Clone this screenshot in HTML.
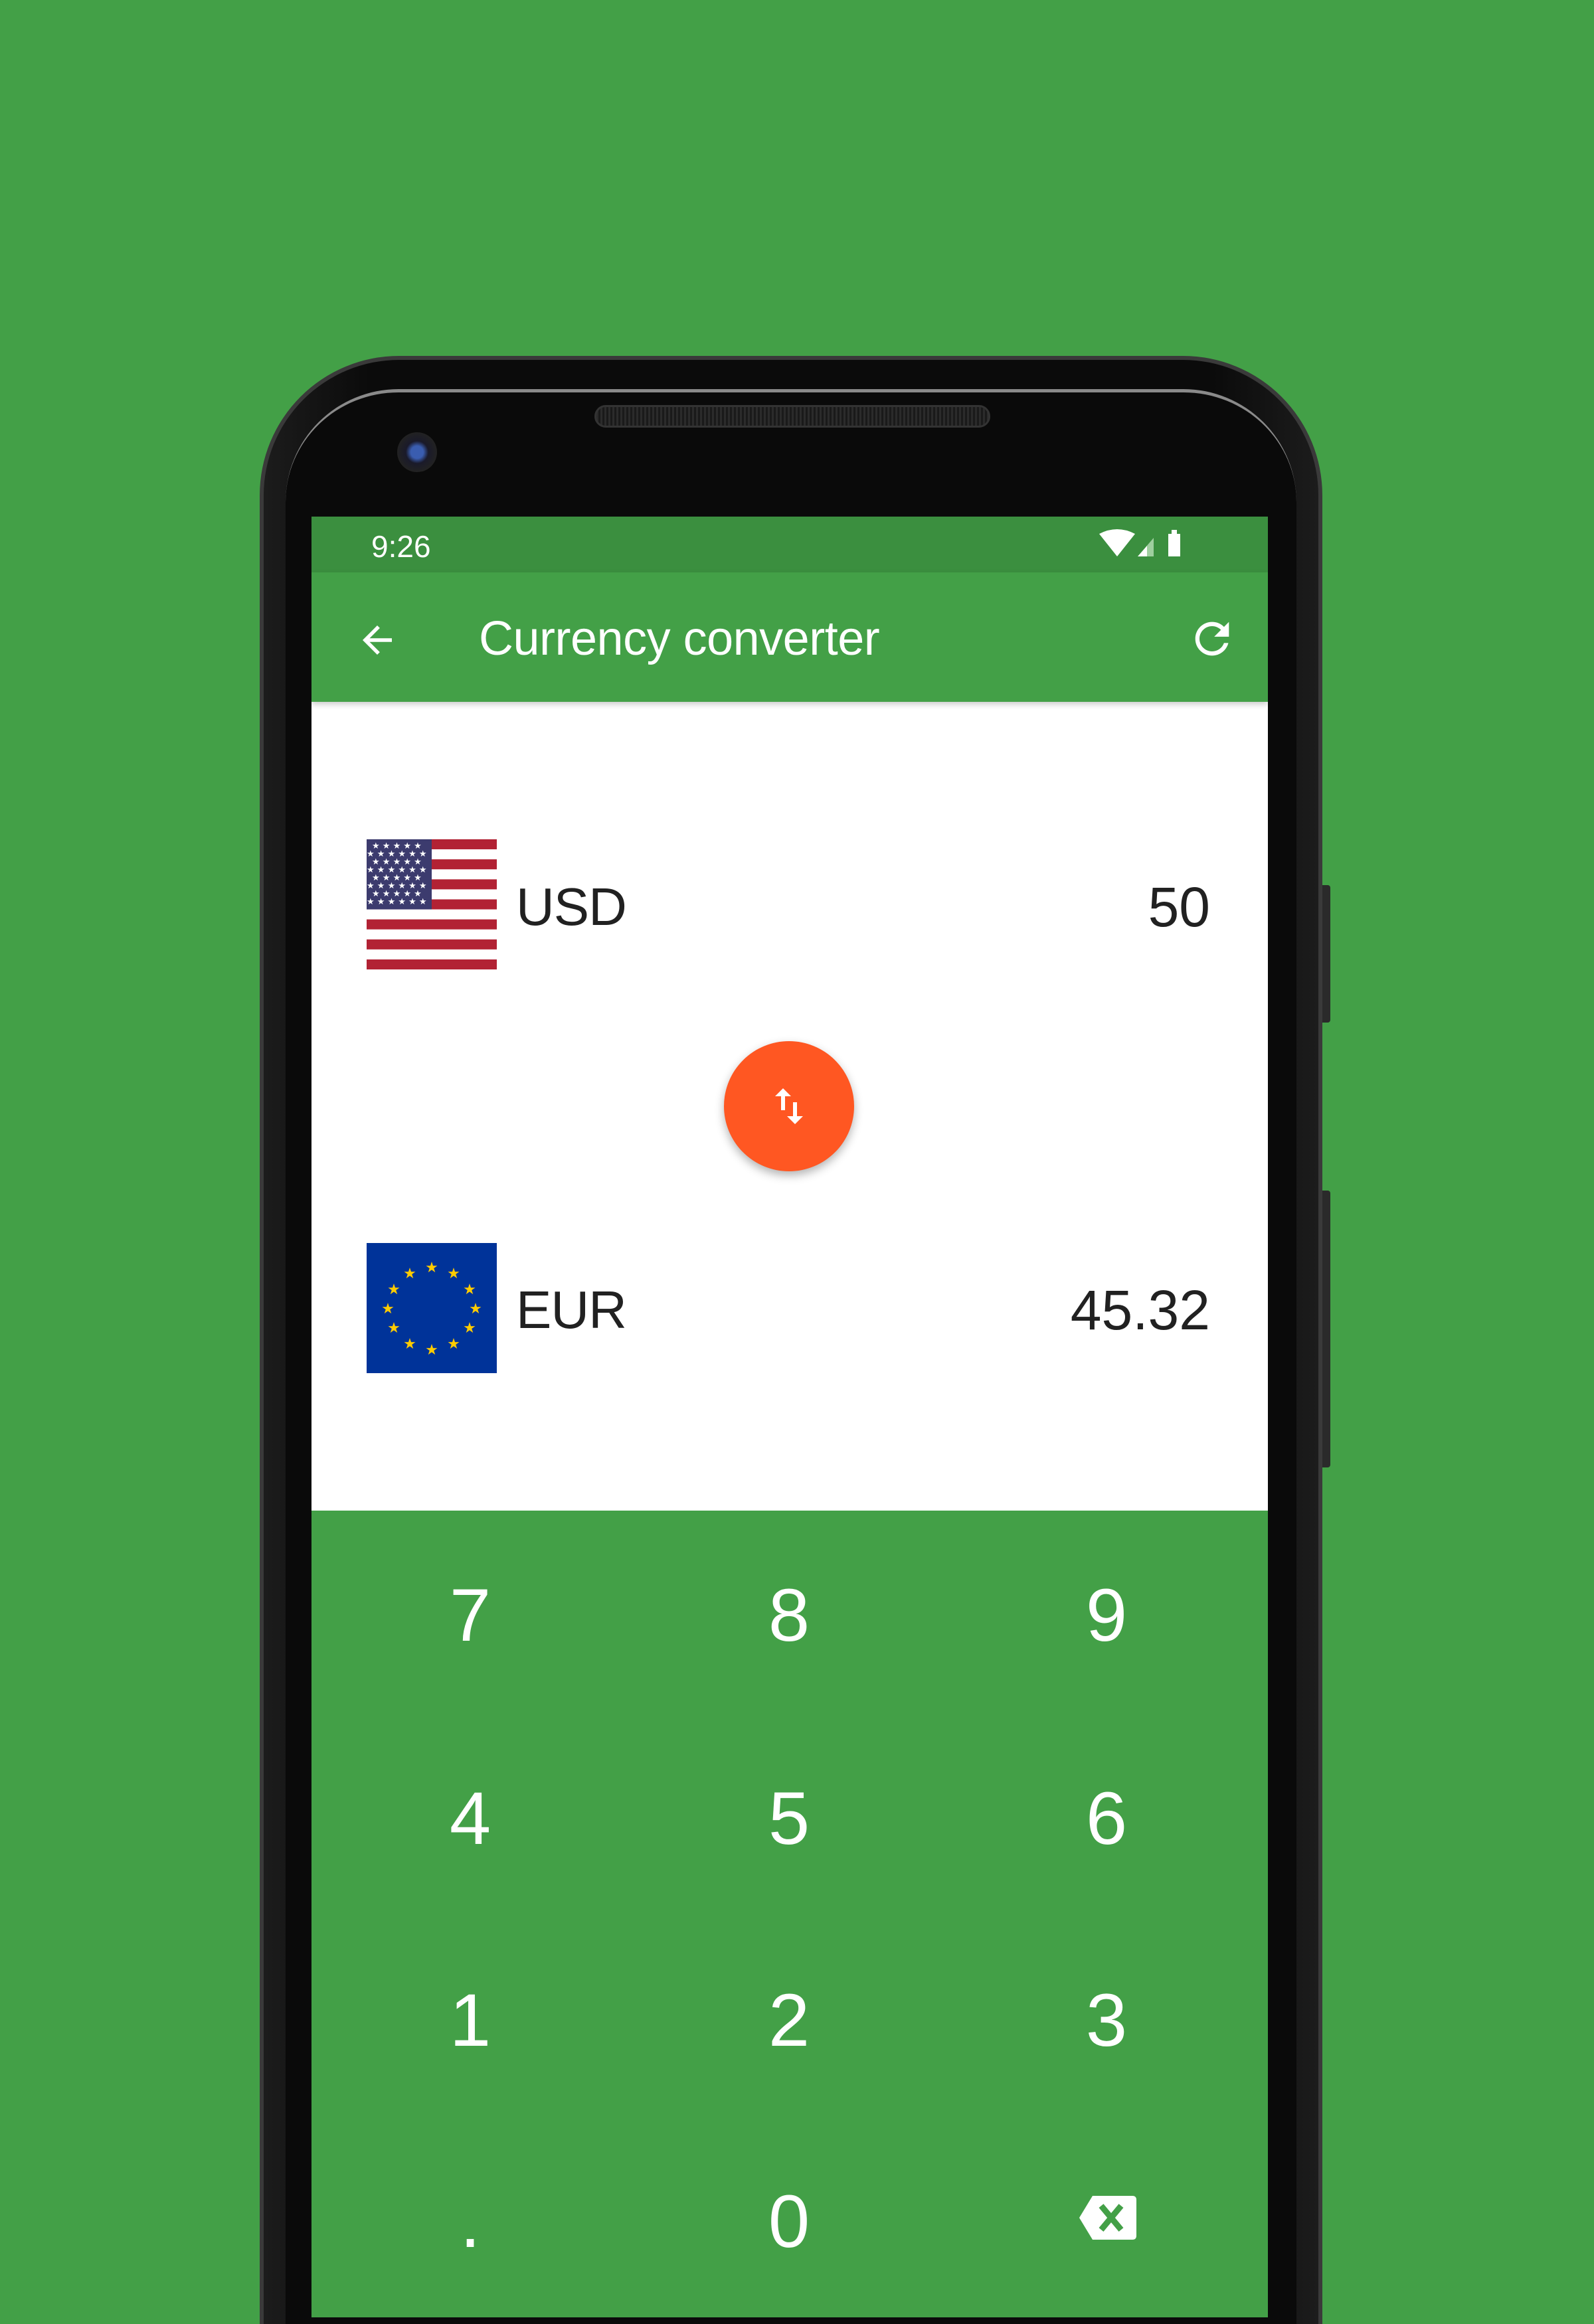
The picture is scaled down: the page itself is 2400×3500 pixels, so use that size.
<!DOCTYPE html>
<html style="width:2400px;height:3500px;overflow:hidden"><head><meta charset="utf-8"><style>
*{margin:0;padding:0;box-sizing:border-box}
body{width:2400px;height:3500px;background:#43a047;position:relative;overflow:hidden;font-family:"Liberation Sans",sans-serif}
.abs{position:absolute}
.phone{left:391px;top:536px;width:1600px;height:2964px;background:linear-gradient(90deg,#1c1c1c,#0b0b0b 10%,#0b0b0b 90%,#1c1c1c);border-radius:210px 210px 0 0;border:6px solid #3a3a3a;border-bottom:none}
.inner{left:430px;top:586px;width:1522px;height:2914px;background:#0a0a0a;border-radius:170px 170px 0 0;border-top:5px solid #8a8a8a}
.btn{background:#2a2a2a;width:12px;left:1991px;border-radius:0 4px 4px 0}
.screen{left:469px;top:778px;width:1440px;height:2712px;background:#fff;overflow:hidden}
.key{position:absolute;color:#fff;font-size:112px;width:300px;text-align:center;margin-left:-150px;line-height:1}
.cur{position:absolute;font-size:84px;color:#212121}
</style></head><body>
<div class="abs phone"></div>
<div class="abs inner"></div>
<div class="abs btn" style="top:1333px;height:207px"></div>
<div class="abs btn" style="top:1793px;height:417px"></div>
<div class="abs" style="left:895px;top:610px;width:596px;height:34px;border-radius:17px;background:repeating-linear-gradient(90deg,#2b2b2b 0 3px,#1a1a1a 3px 6px);border:3px solid #333"></div>
<div class="abs" style="left:598px;top:651px;width:60px;height:60px;border-radius:50%;background:radial-gradient(circle,#3a5db0 0 22%,#1a1a2a 40%,#222 70%,#111)"></div>
<div class="abs screen">
 <div class="abs" style="left:0;top:0;width:1440px;height:84px;background:#3b8f3f"></div>
 <div class="abs" style="left:90px;top:18px;color:#fff;font-size:46px">9:26</div>
 <svg class="abs" style="left:1186px;top:18px" width="124" height="50" viewBox="0 0 124 50">
  <path d="M0 8 Q27 -6 54 8 L27 42 Z" fill="#fff"/>
  <path d="M58 42 L82 14 L82 42Z" fill="#9fcf9f"/><path d="M58 42 L72 26 L72 42Z" fill="#fff"/>
  <rect x="104" y="8" width="18" height="34" fill="#fff"/><rect x="109" y="2" width="8" height="6" fill="#fff"/>
 </svg>
 <div class="abs" style="left:0;top:84px;width:1440px;height:195px;background:#43a047;box-shadow:0 4px 8px rgba(0,0,0,.2)"></div>
 <svg class="abs" style="left:66px;top:153px" width="66" height="66" viewBox="0 0 24 24"><path d="M20 11H7.830l5.59-5.59L12 4l-8 8 8 8 1.41-1.41L7.830 13H20v-2z" fill="#fff"/></svg>
 <div class="abs" style="left:252px;top:143px;color:#fff;font-size:72px;letter-spacing:-0.5px">Currency converter</div>
 <svg class="abs" style="left:1318px;top:146px" width="76" height="76" viewBox="0 0 24 24"><path d="M17.65 6.35A7.958 7.958 0 0 0 12 4c-4.420 0-7.99 3.58-7.99 8s3.57 8 7.99 8c3.73 0 6.84-2.550 7.73-6h-2.080A5.99 5.99 0 0 1 12 18c-3.31 0-6-2.69-6-6s2.69-6 6-6c1.66 0 3.14.69 4.22 1.78L13 11h7V4l-2.35 2.35z" fill="#fff"/></svg>
 <svg class="abs" style="left:83px;top:486px" width="196" height="196" viewBox="0 0 13 13" preserveAspectRatio="none">
  <rect width="13" height="13" fill="#fff"/>
  <g fill="#b22234"><rect y="0" width="13" height="1"/><rect y="2" width="13" height="1"/><rect y="4" width="13" height="1"/><rect y="6" width="13" height="1"/><rect y="8" width="13" height="1"/><rect y="10" width="13" height="1"/><rect y="12" width="13" height="1"/></g>
  <rect width="6.5" height="7" fill="#3c3b6e"/>
 </svg>
 <svg class="abs" style="left:83px;top:486px" width="98" height="106" viewBox="0 0 98 106">
  <g fill="#fff" font-size="13" font-family="DejaVu Sans">
  <text x="8" y="14">★ ★ ★ ★ ★</text><text x="0" y="26">★ ★ ★ ★ ★ ★</text><text x="8" y="38">★ ★ ★ ★ ★</text><text x="0" y="50">★ ★ ★ ★ ★ ★</text><text x="8" y="62">★ ★ ★ ★ ★</text><text x="0" y="74">★ ★ ★ ★ ★ ★</text><text x="8" y="86">★ ★ ★ ★ ★</text><text x="0" y="98">★ ★ ★ ★ ★ ★</text></g>
 </svg>
 <div class="cur" style="left:308px;top:542px;font-size:80px;letter-spacing:-1px">USD</div>
 <div class="cur" style="right:87px;top:540px">50</div>
 <div class="abs" style="left:621px;top:790px;width:196px;height:196px;border-radius:50%;background:#ff5722;box-shadow:0 6px 14px rgba(0,0,0,.3)"></div>
 <svg class="abs" style="left:683px;top:852px" width="72" height="72" viewBox="0 0 24 24"><path d="M16 17.01V10h-2v7.01h-3L15 21l4-3.99h-3zM9 3L5 6.99h3V14h2V6.99h3L9 3z" fill="#fff"/></svg>
 <svg class="abs" style="left:83px;top:1094px" width="196" height="196" viewBox="0 0 196 196">
  <rect width="196" height="196" fill="#003399"/>
  <g fill="#ffcc00" font-size="22" font-family="DejaVu Sans" text-anchor="middle">
   <text x="98" y="44">★</text><text x="131" y="53">★</text><text x="155" y="77">★</text><text x="164" y="106">★</text><text x="155" y="135">★</text><text x="131" y="159">★</text><text x="98" y="168">★</text><text x="65" y="159">★</text><text x="41" y="135">★</text><text x="32" y="106">★</text><text x="41" y="77">★</text><text x="65" y="53">★</text></g>
 </svg>
 <div class="cur" style="left:308px;top:1149px;font-size:80px;letter-spacing:-1px">EUR</div>
 <div class="cur" style="right:87px;top:1147px">45.32</div>
 <div class="abs" style="left:0;top:1497px;width:1440px;height:1215px;background:#43a047">
  <div class="key" style="left:239px;top:102px">7</div><div class="key" style="left:719px;top:102px">8</div><div class="key" style="left:1197px;top:102px">9</div>
  <div class="key" style="left:239px;top:408px">4</div><div class="key" style="left:719px;top:408px">5</div><div class="key" style="left:1197px;top:408px">6</div>
  <div class="key" style="left:239px;top:712px">1</div><div class="key" style="left:719px;top:712px">2</div><div class="key" style="left:1197px;top:712px">3</div>
  <div class="key" style="left:239px;top:1015px">.</div><div class="key" style="left:719px;top:1015px">0</div>
  <svg class="abs" style="left:1156px;top:1032px" width="86" height="66" viewBox="0 0 86 66"><path d="M20 0H80Q86 0 86 6V60Q86 66 80 66H20L0 33Z" fill="#fff"/><path d="M33 15L63 51M63 15L33 51" stroke="#43a047" stroke-width="9"/></svg>
 </div>
</div>
</body></html>
